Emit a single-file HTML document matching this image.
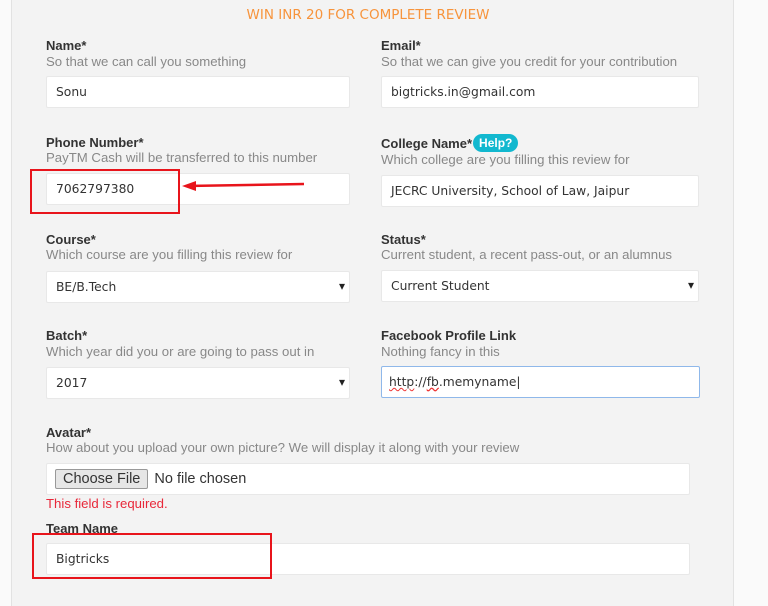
<!DOCTYPE html>
<html><head><style>
*{box-sizing:border-box;margin:0;padding:0}
body{width:768px;height:606px;overflow:hidden;background:#fafafa;font-family:"DejaVu Sans","Liberation Sans",sans-serif;position:relative}
.main{position:absolute;left:11px;top:0;width:723px;height:606px;background:#f3f3f3;border-left:1px solid #e2e2e2;border-right:1px solid #e2e2e2}
.t{position:absolute;left:0;width:736px;top:7px;text-align:center;color:#f7943c;font-size:13.5px}
.l{position:absolute;font-family:"Liberation Sans",sans-serif;font-size:13px;font-weight:bold;color:#333;white-space:nowrap}
.d{position:absolute;font-family:"Liberation Sans",sans-serif;font-size:13.2px;color:#888;white-space:nowrap}
.i{position:absolute;background:#fff;border:1px solid #e8e8e8;border-radius:2px;font-size:12.3px;color:#333;padding-left:9px;display:flex;align-items:center;height:32px;white-space:nowrap}
.s::after{content:"▾";position:absolute;right:4px;top:7px;font-size:12px;color:#222}
.red{position:absolute;border:2.5px solid #e8141b}
.help{display:inline-block;background:#12b8cf;color:#fff;border-radius:10px;padding:2px 6px;font-size:12px;font-weight:bold;margin-left:1px;vertical-align:1px}
</style></head><body>
<div class="main"></div>
<div class="t">WIN INR 20 FOR COMPLETE REVIEW</div>

<div class="l" style="left:46px;top:38px">Name*</div>
<div class="d" style="left:46px;top:54px">So that we can call you something</div>
<div class="i" style="left:46px;top:76px;width:304px">Sonu</div>
<div class="l" style="left:381px;top:38px">Email*</div>
<div class="d" style="left:381px;top:54px">So that we can give you credit for your contribution</div>
<div class="i" style="left:381px;top:76px;width:318px">bigtricks.in@gmail.com</div>

<div class="l" style="left:46px;top:135px">Phone Number*</div>
<div class="d" style="left:46px;top:150px">PayTM Cash will be transferred to this number</div>
<div class="i" style="left:46px;top:173px;width:304px">7062797380</div>
<div class="l" style="left:381px;top:134px">College Name*<span class="help">Help?</span></div>
<div class="d" style="left:381px;top:152px">Which college are you filling this review for</div>
<div class="i" style="left:381px;top:175px;width:318px">JECRC University, School of Law, Jaipur</div>

<div class="l" style="left:46px;top:232px">Course*</div>
<div class="d" style="left:46px;top:247px">Which course are you filling this review for</div>
<div class="i s" style="left:46px;top:271px;width:304px">BE/B.Tech</div>
<div class="l" style="left:381px;top:232px">Status*</div>
<div class="d" style="left:381px;top:247px">Current student, a recent pass-out, or an alumnus</div>
<div class="i s" style="left:381px;top:270px;width:318px">Current Student</div>

<div class="l" style="left:46px;top:328px">Batch*</div>
<div class="d" style="left:46px;top:344px">Which year did you or are going to pass out in</div>
<div class="i s" style="left:46px;top:367px;width:304px">2017</div>
<div class="l" style="left:381px;top:328px">Facebook Profile Link</div>
<div class="d" style="left:381px;top:344px">Nothing fancy in this</div>
<div class="i" style="left:381px;top:366px;width:319px;border:1px solid #8fb8ea;padding-left:7px"><span style="text-decoration:underline wavy #e33;text-decoration-thickness:1px">http</span>://<span style="text-decoration:underline wavy #e33">fb</span>.memyname|</div>

<div class="l" style="left:46px;top:425px">Avatar*</div>
<div class="d" style="left:46px;top:440px">How about you upload your own picture? We will display it along with your review</div>
<div class="i" style="left:46px;top:463px;width:644px;padding-left:8px;font-family:'Liberation Sans',sans-serif;font-size:14.5px"><span style="border:1px solid #999;background:#e6e6e6;border-radius:2px;padding:1px 7px;margin-right:6px">Choose File</span>No file chosen</div>
<div class="d" style="left:46px;top:496px;color:#e8283a">This field is required.</div>
<div class="l" style="left:46px;top:521px">Team Name</div>
<div class="i" style="left:46px;top:543px;width:644px">Bigtricks</div>

<div class="red" style="left:30px;top:169px;width:150px;height:45px"></div>
<div class="red" style="left:32px;top:533px;width:240px;height:46px"></div>
<svg style="position:absolute;left:180px;top:178px" width="130" height="16"><path d="M6 8 L124 6" stroke="#e8141b" stroke-width="2.5"/><path d="M2 8 L16 3 L16 13 Z" fill="#e8141b"/></svg>
</body></html>
